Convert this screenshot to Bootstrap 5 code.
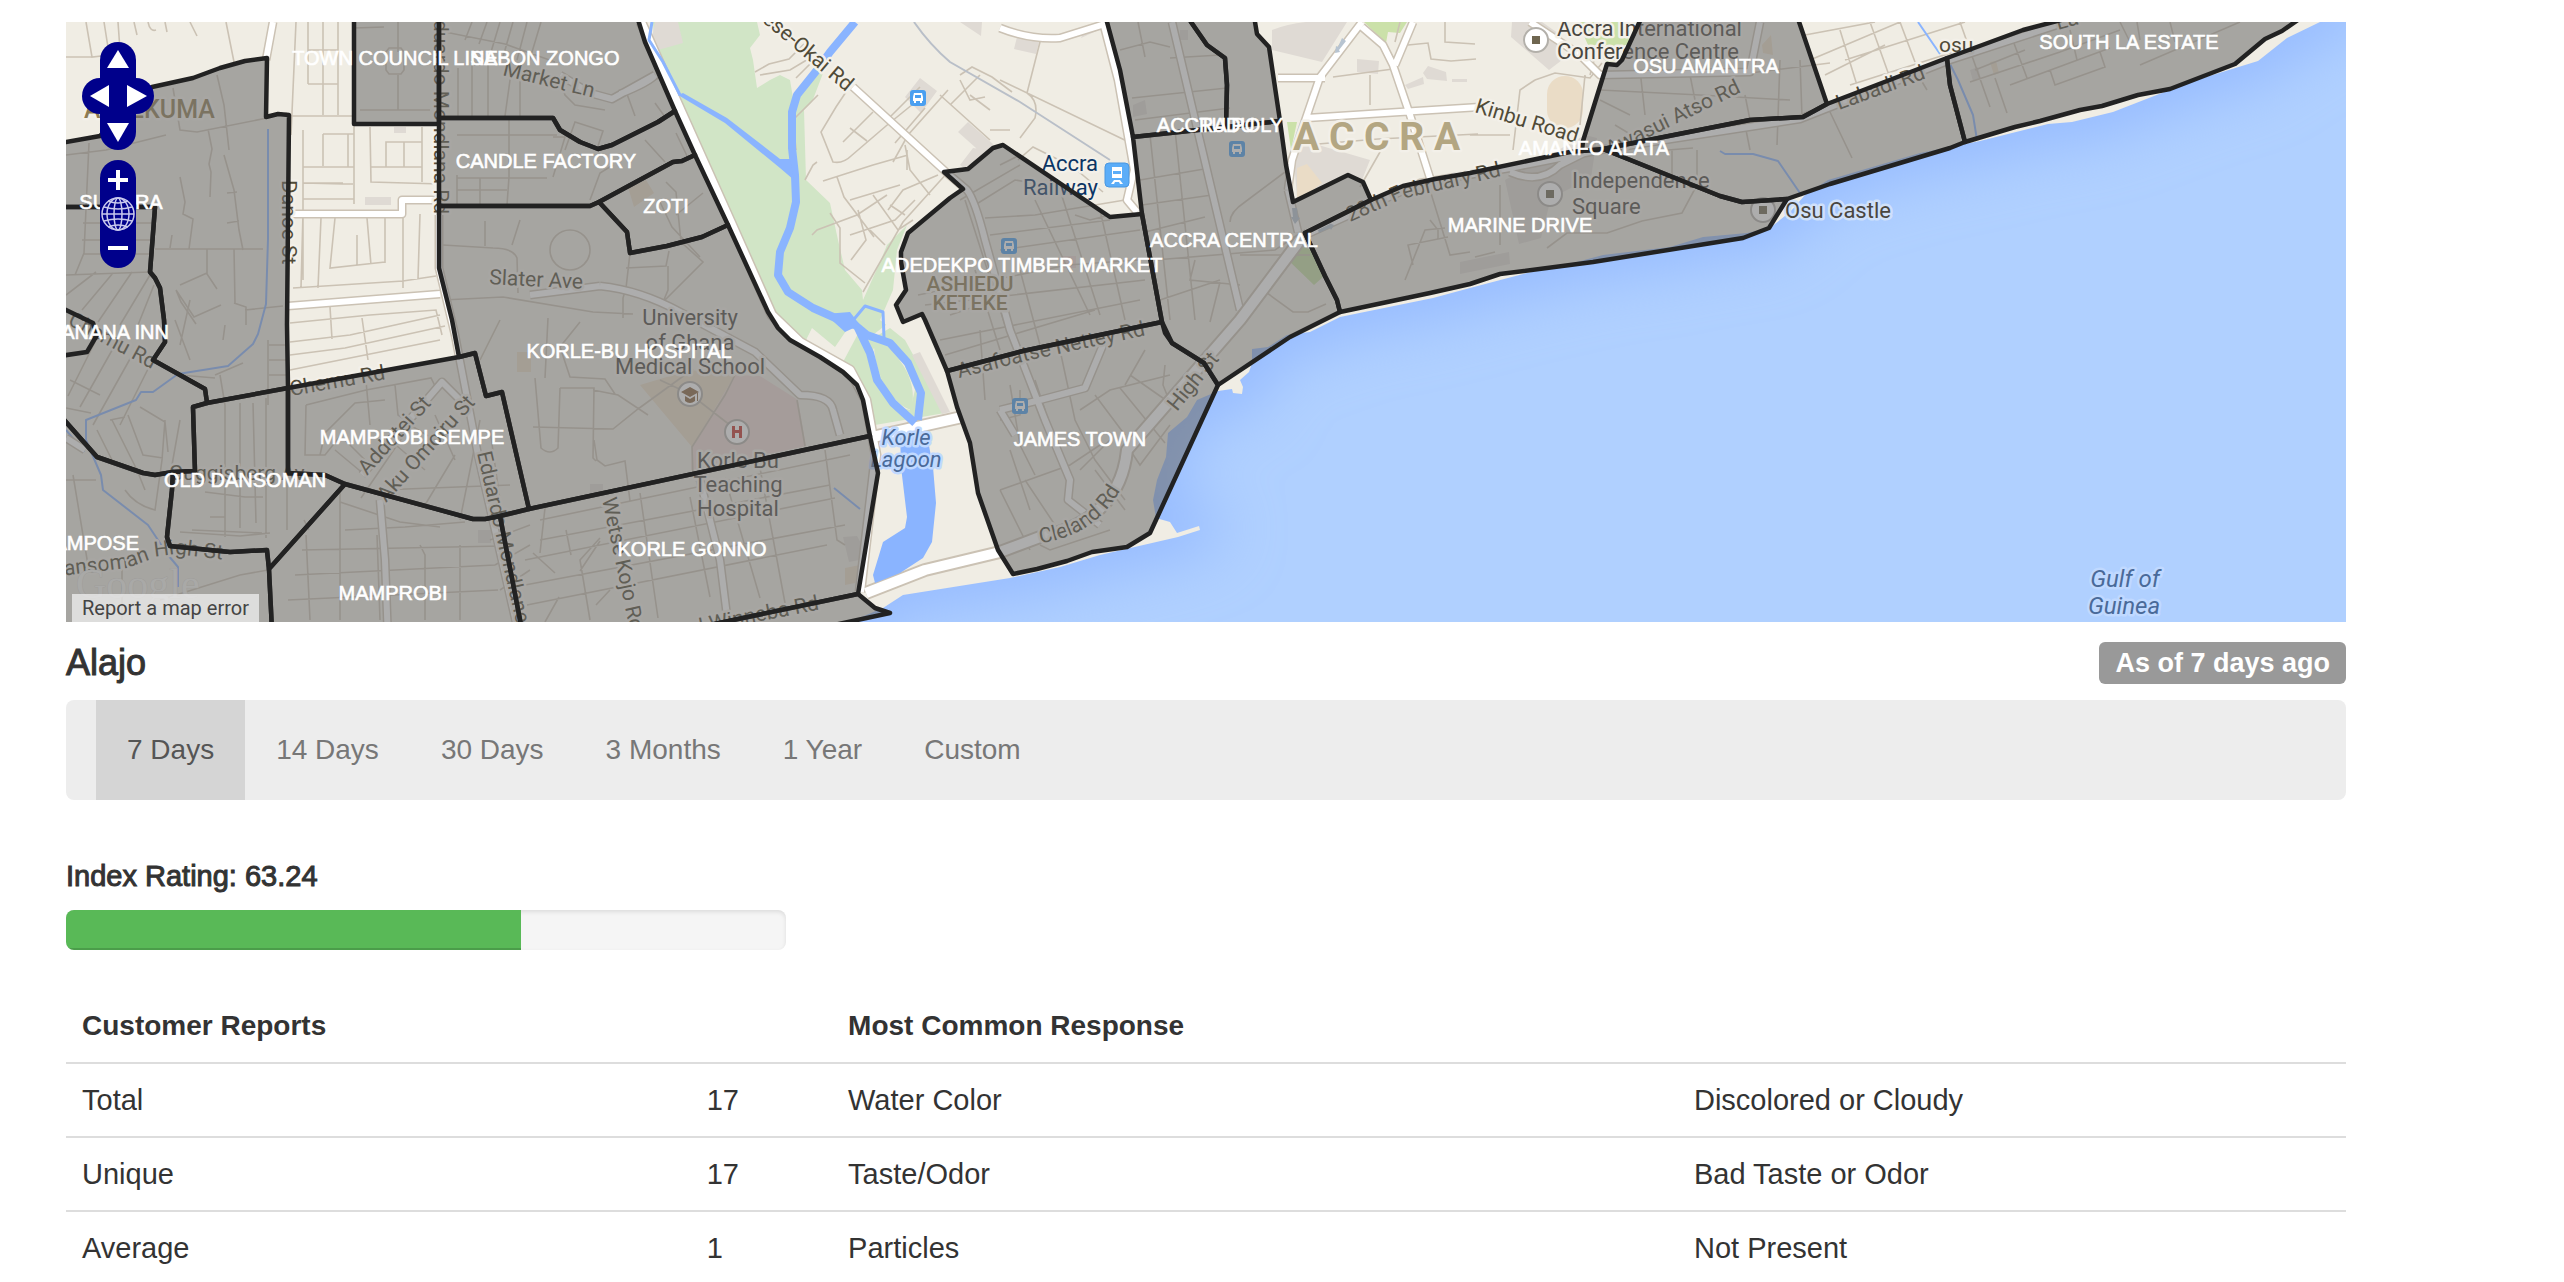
<!DOCTYPE html>
<html lang="en">
<head>
<meta charset="utf-8">
<meta name="viewport" content="width=device-width, initial-scale=1">
<title>Alajo water quality</title>
<link rel="stylesheet" href="https://cdn.jsdelivr.net/npm/bootstrap@5.3.0/dist/css/bootstrap.min.css">
<style>
body{font-family:"Liberation Sans",Arial,sans-serif;font-size:28px;line-height:40px;color:#333;background:#fff}
.page-shell{max-width:2346px;padding:22px 0 0 66px}
.map-box{background:#b0d0ff}
.map-box>svg{width:100%;height:auto}
.map-controls{position:absolute;left:16px;top:20px}
.map-controls button{width:36px;height:36px;padding:0;border:0;background:transparent;display:block}
.map-controls svg{display:block}
.pan-pad{width:72px;height:108px}
.pan-pad::before,.pan-pad::after{content:"";position:absolute;background:#00008b;border-radius:18px}
.pan-pad::before{left:18px;top:0;width:36px;height:108px}
.pan-pad::after{left:0;top:36px;width:72px;height:36px}
.pan-pad>*{position:relative;z-index:1}
.zoom-pill{background:#00008b;border-radius:18px}
.map-report{position:absolute;left:6px;bottom:0;height:28px;line-height:28px;padding:0 10px;font-family:Roboto,sans-serif;font-size:20px;color:#444;background:rgba(245,245,245,.7);text-decoration:none}
.place-name{font-size:36px;line-height:42px;font-weight:500;-webkit-text-stroke:1px #333}
.age-tag{font-size:27px;line-height:42px;font-weight:700;padding:0 16px;border-radius:6px;background:#999;color:#fff}
.range-bar{background:#ededed;border-radius:8px;padding:0 30px}
.range-bar .nav-link{padding:30px 31px;line-height:40px;color:#777}
.range-bar .nav-link.active{background:#d5d5d5;color:#555}
.rating-title{font-size:29px;line-height:32px;font-weight:500;margin:60px 0 18px;-webkit-text-stroke:1px #333}
.rating-track{width:720px;max-width:100%;height:40px;border-radius:8px;background:#f5f5f5;box-shadow:inset 0 2px 4px rgba(0,0,0,.1)}
.rating-track .progress-bar{background:#59b957;box-shadow:inset 0 -2px 0 rgba(0,0,0,.15)}
.report-table{margin-top:40px;table-layout:fixed;color:#333;border-color:#ddd}
.report-table>:not(caption)>*>*{padding:16px;border-bottom-width:2px;color:#333}
.report-table td{font-size:29px}
.c-name{width:27.4%}.c-count{width:6.2%}.c-kind{width:37.1%}
/* map drawing */
.minor{fill:none;stroke:#cbc2b4;stroke-width:1.6}
.casing{fill:none;stroke:#cbc2b4;stroke-linejoin:round}
.major{fill:none;stroke:#fff;stroke-linejoin:round}
.mid .casing,.casing.mid{stroke-width:9}.major.mid{stroke-width:6}
.casing.wide{stroke-width:14}.major.wide{stroke-width:10}
.river{fill:none;stroke:#8ab4ff;stroke-linejoin:round}
.park{fill:#d1e5c6}.bldg{fill:#dfdad4}.sand{fill:#f0ede4}
.zones{fill:#6d6d6d;fill-opacity:.56;stroke:#222;stroke-width:4.500;stroke-linejoin:round}
.road-text{font-family:Roboto,sans-serif;font-size:21px;fill:#504b38;stroke:#f3f0e9;stroke-width:5;stroke-linejoin:round;paint-order:stroke}
.poi-text{font-family:Roboto,sans-serif;font-size:22px;fill:#494640;stroke:#f3f0e9;stroke-width:5;stroke-linejoin:round;paint-order:stroke}
.zone-text{font-family:"Liberation Sans",Arial,sans-serif;font-size:20px;fill:#fff;stroke:#fff;stroke-width:.6}
</style>
<script src="https://cdn.jsdelivr.net/npm/bootstrap@5.3.0/dist/js/bootstrap.bundle.min.js"></script>
</head>
<body>
<main class="page-shell">
<section class="map-box position-relative overflow-hidden" aria-label="District map">
<svg class="d-block" viewBox="66 22 2280 600" role="img" aria-label="Accra districts">
<defs>
<filter id="soft" x="-10%" y="-30%" width="120%" height="160%"><feGaussianBlur stdDeviation="30"/></filter>
<path id="land" d="M40,0H2350L2320,22 2287,38 2258,61 2190,82 2113,112 2072,122 2048,124 1980,141 1950,147 1920,153 1828,180 1805,195 1790,212 1770,228 1747,233 1703,237 1670,247 1603,255 1573,263 1527,273 1470,288 1433,298 1340,317 1310,332 1287,335 1268,347 1252,349 1252,363 1249,372 1240,380 1243,387 1242,394 1233,393 1232,389 1218,391 1197,400 1187,417 1168,433 1166,457 1157,480 1153,500 1156,518 1170,522 1177,533 1199,526 1200,530 1178,537 1100,555 1060,567 1010,578 947,588 903,595 883,608 840,626 840,650H40Z"/>
<g id="bus"><rect width="16" height="16" rx="3" fill="#4a9ff0"/><path d="M4 3h8l1 4v4h-1v2h-2v-2H6v2H4v-2H3V7z" fill="#fff"/><path d="M5 5h6v3H5z" fill="#4a9ff0"/></g>
</defs>
<use href="#land" fill="#96bbff" stroke="#96bbff" stroke-width="40" filter="url(#soft)"/>
<use href="#land" fill="#f0ede4"/>

<!-- parks and blocks -->
<path class="park" d="M653,22H757L760,35 750,48 753,60 757,88 770,80 780,75 790,80 793,98 817,70 825,68 812,102 804,110 806,180 830,203 838,240 845,270 862,290 863,300 880,262 887,245 907,225 897,250 893,290 880,320 905,340 945,413 875,425 860,382 842,364 800,345 770,315 735,235 690,140 655,55Z"/>
<path class="sand" d="M806,340L812,328 835,347 848,328 860,330 843,362ZM866,340L890,322 895,310 903,322 925,320 947,371 957,410 945,414 920,355 895,325 880,334ZM872,352L874,348 903,362 915,390 910,410 895,406 880,375Z"/>
<path class="park" d="M874,345C895,345 920,380 911,410 895,405 875,380 874,345Z"/>
<path class="bldg" d="M655,22H678L683,43 658,50 652,38ZM920,78l17,13-16,22-16-16ZM958,132l10-10 25,22-8,12ZM960,165l13-17 20,3-24,21ZM960,22h22l-1,14ZM1017,37l22,5-3,12-22-5ZM1081,38l22-10v-6l-18,6ZM912,355l8-3 30,60-8,2ZM1272,30q30,-12 75,-8l-25,40-50-12ZM1357,59l22,2-1,13-21-2ZM1405,85l18-8 1,7-16,5ZM1423,73l5-7 18,6 1,9-20-2ZM1452,79h15v3h-15ZM1293,150l15-8 62,18-8,20-20,-3-45,20ZM1512,22h30l20,14v24l-13,10-38-33ZM365,197h26v8h-26ZM394,127h12v6h-12Z"/>
<path fill="#cbe1a9" d="M1364,22H1407L1400,33 1388,32 1386,43ZM1287,122H1297L1291,150ZM1578,22H1640L1622,60 1607,62 1588,45Z"/>
<path fill="#eadcc6" d="M1297,202V168L1307,164 1322,183ZM1762,45l9-10 2,20-10-2ZM640,385L690,370 735,375 692,447ZM628,187l18-7 8,13-20,14ZM845,568l15-3-5,18-10,2ZM517,352h14v20h-14ZM1990,62l6-1 3,12-5,2Z"/>
<path fill="#ecd8d3" d="M735,375L760,376 798,400 806,446 691,470 692,447ZM1062,256h14v12h-14Z"/>
<path fill="#c6dfa5" d="M1288,260L1303,247 1313,250 1323,277 1314,285Z"/>
<rect x="1547" y="76" width="36" height="52" rx="18" fill="#eadcc6"/>
<path class="bldg" d="M1505,180l80-45 12,3-6,40-40,20-10,40-22,6ZM1460,262l49-10 1,12-50,10ZM1180,30h8v10h-8ZM1133,105l12-5 2,14-14,3ZM843,537l14-1 12,22-20,4ZM1970,70l8-3 3,12-8,2ZM590,484h13v10h-13ZM478,530h13v13h-13Z"/>

<!-- local streets -->
<path class="minor" d="M86,22L92,57 110,55M104,22L110,60M118,22L120,50M66,57L92,57M134,22L137,35M148,22Q150,32 156,30M165,22l2,10M190,22l7,14M226,22l8,40M173,88l7,42 17,2 70-14 20-5M217,75l7,30 5,45M208,129l4,20-3,15 2,8-1,25M66,155l40,-5 60,-15M89,143l-5,110-9,22M83,223h70M82,240h70M84,254h68M66,275l84-3M66,295l30-23M82,310l31-37M98,322l34-50M120,325l30-50M138,325l16-40M224,155l10,35 5,40 4,20M155,249h108M180,177l5,25-2,12 10,5-4,30M172,235l-2,13M227,193l10-1M227,223l12-2M207,249v25l10,15M180,285l27-12M176,290l18,27 27-12M176,290l5,12 15,22M234,249l1,54M245,310l38-4M234,303l12,4v18M296,22l-5,113M308,22v62M323,22v93M338,22v93M308,84h30M308,50h30M291,116h63M303,130v150M323,134v32M348,134v33M323,134h31M303,167h51M303,183h40M303,199h51M354,124v80M370,127l1,55 70,2M370,167h52M386,167v-25h36M404,142v25M422,127v55M303,183l40,1 10,0M293,288l110-7 33-5M303,213l-2,75M321,218l-3,70M335,218l-5,50 55-6M367,218l4,47M385,218v45M357,235v30M403,213v75M420,214l-2,65M290,323l80-8 66-5 6,25M330,307l2,32M362,318l6,42M290,342l60-7 90-20M290,355l55-7 100-22M290,370l40-8 110-22"/>
<path class="minor" d="M398,22v30M354,28l30-1M389,48h12l3,4v18l-3,4h-12l-3-4v-18zM398,75v35M360,110h70M445,32l60,12 50,18M472,22l-7,18M487,22l-8,22M500,22l-9,30M513,22l-10,35M527,22l-10,38M541,22l-12,40M458,68v48M472,60v56M488,62v54M510,70v10l-5,36M520,75v42M457,135h100M457,178h90M480,178v28M509,120v57l-2,28M457,175v31M457,190h50M553,137l12,0-12,40M565,150l10-28 28,9-5,15M590,200l10-27 13,-8M611,100l50-23M627,94l8,22M655,103l10,14M645,140l20,22M676,133l12,25M560,80l5,15 10,10 30,5M630,253l-4,35-3,10v20M626,268l40-2 3-15M668,266v24l-5,12 40-40 -22-20-5-50-10-10M676,215l27,-22M660,202l12,25 28,30M443,245l50,3q20,0 24,10l1,35M485,221v25M520,220l-8,25M443,300l60-3 90,15 40,2M500,320l-20,40M548,318l-3,60M580,322l-20,25 10,30 35,2 10,15M560,388h34l-1,70 3,3M560,388l-2,60q-8,8 -17,0l-6,-70M533,427l80,2 25-20 55-40M593,390l25,5 30,20M594,440l3,20 8,6 20-5 5,40M660,380l30,14 45,35M735,375l-10,20-33,52 1,30M797,400l8,46M540,520l310-65M540,540l290-55M525,560l310-62M525,585l320-60M527,605l300-60M545,508l-5,45M566,530l5,25M640,493l18,125M690,497l20,100M725,478l35,120M760,468l25,135M825,450l12,90 8,5M590,620l-10-60 20,-22M533,553l22,20M580,571l20,-30M545,622l14-25M610,590l-14,15"/>
<path class="minor" d="M98,336l-30,60M115,345l-35,62M135,350l-42,75M70,380l30,15M150,365l-30,60M66,408l25,5M180,345l10-45M180,375l35,3M190,360l-15,-40M225,325l-2,15M215,375l28-12M220,375l5,30M268,340v65M269,345h18M269,360h18M269,375h18M140,407l25,15 3,30M110,420l15-3M97,430l15,30M112,420l25,50 8,20M128,415l15,40 20,3M165,420l-3,40-7,50q-20,-5 -30,-20M180,420l-8,45M66,480h30M73,475l15,90M225,405v130M240,403v125M253,403l3,120M266,398v140M205,492l40,5h18M225,497v40M210,517h15M180,532l60,4 30-3M192,530l70,3M287,470v60M306,405l-1,50h20l20,-25M306,405l60-15 65-12 5,10-75,110M320,455l5-22 30-30 30-3M335,450l30,25M365,370l5,55M395,385l3,30 15,10M345,440l20,20M410,425l30,18M390,440l35,30M435,415l20,45M480,420l-20,100M490,430l10,70M455,455l-30,50M380,490l130-5M340,502l60,20 40,5M345,530l60-3 60-5M380,620l-3,-85M309,530l-5-10M340,490v130M306,535l4,85M302,550l200-4M295,575l200-10M288,600l210-10M425,620v-65l-5-10M460,545v75M160,600l80-25 28-5M122,560v60M490,540l40-15M495,565l35-20M500,590l30,-20"/>
<path class="minor" d="M755,72l14-8 20,-5 15,-15M760,75l30-5 20-12M796,78l15,-15M818,95l-25,25 3,30M846,92l-10,15-15,25 12,30q10,2 18,-6l35-30 27-22M873,112l-30,30M850,128l17,13M805,180l8-15 4,-3M823,181l50-16 35-10M837,177l7,20 15,20 15,20M893,162l15-27 40-45M925,108l-30,35M887,120l33-33M905,145l5,25 20,25M907,150v20M850,200l50,-15M873,195l25,35 15-10M888,210l15-20 35,-15M812,235l5-5 40-15 30,-20M830,213l10,15v35l25,20M850,235l45-15 20-20M858,210l8,30-15,20M870,230l15,15M890,205l15,10M863,292l40-70 45-50M960,75l12-8 20,10 20,15M940,95l50,45M950,105l30-30M970,95l20,15M990,130h20M960,80l10,20 15-3"/>
<path class="minor" d="M1041,38l-14,55M1000,80l135,65M1027,93q12,8 8,25l-15,20M1018,160l15-13 40,20 30,25M1000,165l20,-10M1120,50l30-8 20,5M1138,22l7,35M1170,58l50-3M1132,98l95-10M1135,120l95-12M1150,135l20,185M1175,130l20,190M1140,180l70-12M1142,205l70-10M1145,232l60-15M1155,260l120-10 30,-20M1195,260l-5,20 50,5M1230,222q0,-10 15,-20l40-30M1240,255h70M1263,290l30,22h15l18,-8M1160,300l60-20M1210,322l10,-40M1405,280l20,-50 20,-2M1430,190l20,65 20-3M1413,265l-5-20 40-8M1430,220l8,10v10M1333,77l60-8M1370,75v30M1318,144l60-5 100-5M1380,152l-20,35M1400,22l-5,20M1445,22v20l30,2M1408,45l20,-2 3,16 20,2 25-2M1535,80l-15,10-7,60M1535,80l20-7 35,5 12,-15M1585,75l-5,50M1470,135h40M1590,75l6-22M1600,90l100,5 90,5M1620,78l130,-5 80,-10M1640,70l5,45M1690,75l8,40M1600,100l30,15M1615,125l25,15M1745,95l5,25M1780,60l-3,85M1800,60l2,57M1830,112l22,46M1745,125l5,25M1697,150v35l-15,28-40,8-35,12h-40l-20,15M1672,150v30M1668,150l25,-2M1500,185v60M1475,257l20,-5M1805,35l70,-13M1810,60l90-38M1845,60l120-38M1850,85l110-35M1840,30l20,65M1870,22l25,70M1900,22l15,40M1825,75l60-30M1915,70l12,20M1960,22l30,85M1970,82l90-30 60-22M1975,70l50-20M2012,38l15,40M2010,85l100-37M2050,70l5,15 50-18-5-15M1995,78l12,35M2140,65l100-43M2070,30l7,30M2120,22l10,20M2140,40l-3-18M2170,22l5,20"/>
<path class="minor" d="M950,315l60,-20M918,295l150-30 70-5M925,305l220-25M940,340l200-40M945,355l150,-45M960,200l60-35M975,205l40-25 30,5M985,218l50,-3 90-15M990,235l120-15M1000,250l140-20M1035,200l55,115M1060,190l40,125M1100,210l25,110M965,200l40,125M1075,215l15,5 20,-5M975,270l25,80M1020,270l20,75M985,400l-5,-70M1000,420l20,-5v-25M1010,385l10,60 15,30M1035,380l10,30M1060,350l15,70 20,40 30,40M1080,410l30,-20 60-15M1095,395l30,40M1120,388l45,55M1130,375l50,35M1145,350l-20,35M1165,365l-2,20 8,20M1000,490l70-25 30-20M1000,490l30,60M1025,480l30,45M1080,470l30-30M1095,470l30,40M1150,425l-20,25 10,15 30,-40M1040,545l10,5 60-20M1030,510l-20,-60"/>
<circle class="minor" cx="570" cy="250" r="20"/>
<path class="river" stroke-width="2" d="M268,129v110l-2,65-8,30-5,10-25,22-50,8-25,18h-12l-5,8-50,20v20l15,35 2,15 45,35 20,30 10,12v20M66,430l18,22M834,488l26,21M1720,151l5,3h28l25,7 24,35M1948,60l10,20 15,35 4,25M1918,22l22,32"/>

<!-- main roads -->
<g class="casing mid">
<path d="M273,22L266,60M290,214H402V200H440M288,306L440,294M620,94Q650,82 655,75M560,75L590,93 612,99 655,75M439,206V268L455,335 478,455 520,640M600,286Q640,290 680,312L755,352 800,395Q830,395 833,410L840,435M530,295L600,286M853,87L947,173 967,190Q975,200 985,240L1010,330 1045,420 1070,480 1068,500 1100,525M1000,28Q1030,40 1060,38L1105,24M1103,22L1118,80 1134,170 1127,200 1137,212M1172,22L1240,310M1362,22L1320,77 1306,118 1292,160 1288,190M1278,78H1325M1362,27L1383,45 1393,65 1410,115 1430,178M1413,22L1395,65M1307,118L1400,112 1480,107M1288,190L1298,232M1303,236L1420,183 1510,168 1600,150 1800,119 1950,60 2060,24M1510,172Q1540,185 1560,165L1590,150M1530,22L1580,55 1600,75 1750,72 1760,22M700,480L720,560 730,640M380,500L385,560 388,640M66,438L85,450M362,475L442,382 470,410M1000,410L1040,400 1085,388 1103,345M1015,435L1000,410"/>
</g>
<g class="major mid">
<path d="M273,22L266,60M290,214H402V200H440M288,306L440,294M620,94Q650,82 655,75M560,75L590,93 612,99 655,75M439,206V268L455,335 478,455 520,640M600,286Q640,290 680,312L755,352 800,395Q830,395 833,410L840,435M530,295L600,286M853,87L947,173 967,190Q975,200 985,240L1010,330 1045,420 1070,480 1068,500 1100,525M1000,28Q1030,40 1060,38L1105,24M1103,22L1118,80 1134,170 1127,200 1137,212M1172,22L1240,310M1362,22L1320,77 1306,118 1292,160 1288,190M1278,78H1325M1362,27L1383,45 1393,65 1410,115 1430,178M1413,22L1395,65M1307,118L1400,112 1480,107M1288,190L1298,232M1303,236L1420,183 1510,168 1600,150 1800,119 1950,60 2060,24M1510,172Q1540,185 1560,165L1590,150M1530,22L1580,55 1600,75 1750,72 1760,22M700,480L720,560 730,640M380,500L385,560 388,640M66,438L85,450M362,475L442,382 470,410M1000,410L1040,400 1085,388 1103,345M1015,435L1000,410"/>
</g>
<path class="casing wide" d="M868,438L962,417M866,593L925,570 1000,552 1040,537Q1120,520 1127,450L1240,320 1300,240"/>
<path class="casing" stroke-width="11" d="M641,22L732,225 772,315 800,342 850,370 866,400 876,455 860,592"/>
<path class="major" stroke-width="8" d="M641,22L732,225 772,315 800,342 850,370 866,400 876,455 860,592"/>
<path class="major wide" d="M868,438L962,417M866,593L925,570 1000,552 1040,537Q1120,520 1127,450L1240,320 1300,240"/>
<path fill="none" stroke="#b9bfc8" stroke-width="2" d="M914,22Q930,45 950,62L1020,102 1110,160"/>

<!-- river and lagoon -->
<path class="river" stroke-width="8" d="M855,22L830,52 817,70 797,95 792,112V148L795,175 796,202 790,228 780,252 778,275 788,292 813,308 840,320 855,325 867,335 890,343 908,363 921,393 918,420M858,328L870,353 877,380 893,403 915,423"/>
<path class="river" stroke-width="3" d="M652,22L649,40 663,62 680,95M850,324L865,306 883,312 884,338"/>
<path fill="#8ab4ff" d="M678,95L683,93 727,118 780,159H790L794,180 780,168 725,123ZM825,314L850,312 860,325 845,332ZM900,432L927,435 933,467 936,503 932,542 923,558 900,573 875,583 873,575 883,542 905,528 907,517 901,467Z"/>

<!-- street and place names -->
<g class="road-text">
<text transform="translate(282 180) rotate(90)">Danoe St</text>
<text transform="translate(434 214) rotate(90)" text-anchor="end">Eduardo Mondlana Rd</text>
<text transform="translate(477 453) rotate(77)">Eduardo Mondlane</text>
<text transform="translate(502 75) rotate(14)">Market Ln</text>
<text transform="translate(489 284) rotate(3)">Slater Ave</text>
<text transform="translate(291 396) rotate(-10)">Chemu Rd</text>
<text transform="translate(67 324) rotate(28)">Chemu Rd</text>
<text x="169" y="480">Guggisberg Av</text>
<path id="p-dan" d="M51,577L127,568 160,556 176,554 260,564" fill="none" stroke="none"/>
<text><textPath href="#p-dan">Dansoman High St</textPath></text>
<text transform="translate(367 476) rotate(-48)">Addotei St</text>
<text transform="translate(386 503) rotate(-48)">Aku Omoiru St</text>
<text transform="translate(602 499) rotate(78)">Wetse Kojo Rd</text>
<text transform="translate(694 634) rotate(-11)">J Winneba Rd</text>
<text transform="translate(846 92) rotate(40)" text-anchor="end">Obese-Okai Rd</text>
<path id="p-asa" d="M959,378L1030,360 1170,330" fill="none" stroke="none"/>
<text><textPath href="#p-asa">Asafoatse Nettey Rd</textPath></text>
<text transform="translate(1177 412) rotate(-51)">High St</text>
<path id="p-cle" d="M1040,543Q1105,535 1130,470" fill="none" stroke="none"/>
<text><textPath href="#p-cle">Cleland Rd</textPath></text>
<path id="p-feb" d="M1350,222L1402,199 1510,174 1540,168" fill="none" stroke="none"/>
<text><textPath href="#p-feb">28th February Rd</textPath></text>
<text transform="translate(1474 112) rotate(17)">Kinbu Road</text>
<text transform="translate(1610 156) rotate(-26)">Awasui Atso Rd</text>
<text transform="translate(1839 110) rotate(-20)">Labadi Rd</text>
<text x="1939" y="52">osu</text>
<text transform="translate(2058 30) rotate(-16)">La</text>
</g>
<g class="poi-text">
<text x="1557" y="36">Accra International</text><text x="1557" y="59">Conference Centre</text>
<text x="1572" y="188">Independence</text><text x="1572" y="214">Square</text>
<g text-anchor="middle"><text x="690" y="325">University</text><text x="690" y="350">of Ghana</text><text x="690" y="374">Medical School</text>
<text x="738" y="468">Korle Bu</text><text x="738" y="492">Teaching</text><text x="738" y="516">Hospital</text></g>
<g text-anchor="end" style="fill:#0b3565"><text x="1098" y="171">Accra</text><text x="1098" y="195">Railway</text></g>
<g text-anchor="middle" font-style="italic" style="fill:#4a6a99;stroke:#c0d9ff"><text x="906" y="445">Korle</text><text x="906" y="467">Lagoon</text>
<text x="2125" y="587" style="font-size:24px">Gulf of</text><text x="2124" y="614" style="font-size:24px">Guinea</text></g>
<text x="1785" y="218" style="stroke:#cfe0fa">Osu Castle</text>
<g font-weight="500" style="fill:#8d7b52"><text x="84" y="118" style="font-size:25px">ABLEKUMA</text><g text-anchor="middle" style="font-size:21px"><text x="970" y="291">ASHIEDU</text><text x="970" y="310">KETEKE</text></g></g>
<text x="1293" y="150" font-weight="700" style="font-size:39px;fill:#b3a682">A C C R A</text>
<text x="76" y="598" style="font-family:'Liberation Serif',serif;font-size:42px;fill:#f6f5f2;stroke:#dcd9d2;stroke-width:1">Google</text>
</g>

<!-- place markers -->
<g stroke="#b3b0aa" stroke-width="2" fill="#fff"><circle cx="1536" cy="40" r="12"/><circle cx="1550" cy="194" r="12"/><circle cx="1763" cy="210" r="12"/><circle cx="690" cy="394" r="12"/><circle cx="737" cy="432" r="12"/></g>
<path fill="#6f6650" d="M1532,36h8v8h-8zM1546,190h8v8h-8zM1759,206h8v8h-8z"/>
<path fill="#8a6440" d="M681,392L690,387 699,392 690,397ZM685,396L690,399 695,396V401Q690,405 685,401ZM697,393h1v8h-1z"/>
<path fill="#c4342c" d="M732,426h3v4h4v-4h3v12h-3v-5h-4v5h-3z"/>
<use href="#bus" x="910" y="90"/><use href="#bus" x="1001" y="238"/><use href="#bus" x="1229" y="141"/><use href="#bus" x="1012" y="398"/>
<rect x="1105" y="163" width="24" height="24" rx="4" fill="#5badf8" stroke="#4a97e0"/><path fill="#fff" d="M1112,167h10v11h-10zM1111,184l3-4h6l3,4h-3l-1-2h-4l-1,2z"/><path fill="#5badf8" d="M1113,171h8v3h-8z"/>
<path fill="#b7c4d1" d="M1342,38l4,3-7,9 1,2-5,1 1-7 2,1zM1292,208h5l1,9 2,1-5,6-4-7h2zM1318,230l12-6-1-1 5,2-3,5-1-2-11,5z"/>

<!-- districts -->
<g class="zones">
<path d="M50,144L66,142 100,136 152,87 193,78 220,68 245,61 267,58 266,117 278,114 289,115 287,325 288,388 207,403 205,389 153,360 165,342 164,320 160,288 155,278 150,272 155,207 50,207Z"/>
<path d="M50,207H155L150,272 155,278 160,288 164,320 165,342 153,360 205,389 207,403 193,407 195,471 173,472 155,475 143,473 97,457 66,422 50,404Z"/>
<path fill="none" d="M60,307L66,310 93,323 97,335 87,352 60,356"/>
<path d="M50,404L66,422 97,457 143,473 155,475 173,472 172,490 167,537 170,546 230,552 267,550 269,569 272,630H50Z"/>
<path d="M207,403L288,388V473L325,475 345,484 269,569 267,550 230,552 170,546 167,537 172,490 173,472 195,471 193,407Z"/>
<path d="M345,484L473,519 485,519 500,516 522,630H272L269,569Z"/>
<path d="M288,388L459,357 475,353 486,396 502,392 529,509 500,516 485,519 473,519 345,484 325,475 288,473Z"/>
<path d="M354,10V124H439V10Z"/>
<path d="M439,10V118H553L560,130 580,142 598,149 612,145 658,122 675,111 645,42 635,10Z"/>
<path d="M439,118H553L560,130 580,142 598,149 612,145 658,122 675,111 695,155 682,161 673,162 599,202 590,206H439Z"/>
<path d="M695,155L728,225 702,237 667,246 630,253 627,232 599,202 673,162 682,161Z"/>
<path d="M439,206H590L599,202 627,232 630,253 667,246 702,237 728,225 768,312 778,328 790,340 820,357 843,372 857,385 863,400 870,436 529,509 502,392 486,396 475,353 459,357 452,320 439,268Z"/>
<path d="M529,509L870,436 878,473 858,594 700,627 522,630 500,516Z"/>
<path d="M858,594L875,608 890,613 820,628 700,627Z"/>
<path d="M944,172L968,169 993,148 1003,145 1110,217 1142,214 1162,322 1023,351 947,371 925,320 922,314 903,322 896,305 906,290 901,262V252L908,233 950,198 963,189Z"/>
<path d="M947,371L1023,351 1162,322 1165,333 1172,343 1204,363 1218,385 1150,533 1127,547 1092,552 1067,561 1037,569 1013,574 998,550 978,493 970,443 957,407Z"/>
<path d="M1104,10L1107,22 1120,70 1133,137 1226,127 1227,85 1225,58 1207,45 1191,22 1185,10Z"/>
<path d="M1185,10L1191,22 1207,45 1225,58 1227,85 1226,127 1280,121 1269,47 1257,34 1253,10Z"/>
<path d="M1133,137L1226,127 1280,121 1286,165 1293,202 1348,175 1363,182 1371,200 1305,233 1325,276 1337,300 1340,312 1290,337 1218,385 1204,363 1172,343 1162,322 1142,214Z"/>
<path d="M1305,233L1371,200 1403,186 1435,179 1470,173 1570,152 1603,149 1720,196 1742,202 1787,199 1769,228 1743,238 1593,262 1500,274 1470,284 1430,293 1340,312 1337,300 1325,276Z"/>
<path d="M1645,10L1622,60 1617,65 1607,64 1583,141 1582,151 1603,149 1750,120 1803,117 1827,104 1795,10Z"/>
<path d="M1603,149L1750,120 1803,117 1827,104 1947,58 1950,85 1965,142 1950,148 1830,184 1787,199 1742,202 1720,196Z"/>
<path d="M1947,58L2023,30 2080,15H2305L2282,31 2265,39 2235,64 2170,89 2138,95 2102,106 2080,110 2040,121 2015,127 1965,142 1950,85Z"/>
</g>
<g class="zone-text" text-anchor="middle">
<text x="395" y="65">TOWN COUNCIL LINE</text><text x="545" y="65">SABON ZONGO</text><text x="546" y="168">CANDLE FACTORY</text>
<text x="121" y="209">SUKURA</text><text x="666" y="213">ZOTI</text><text x="629" y="358">KORLE-BU HOSPITAL</text>
<text x="169" y="339" text-anchor="end">BANANA INN</text><text x="245" y="487">OLD DANSOMAN</text><text x="412" y="444">MAMPROBI SEMPE</text>
<text x="139" y="550" text-anchor="end">MAMPOSE</text><text x="393" y="600">MAMPROBI</text><text x="692" y="556">KORLE GONNO</text>
<text x="1022" y="272">ADEDEKPO TIMBER MARKET</text><text x="1080" y="446">JAMES TOWN</text><text x="1220" y="132">ACCRA POLY</text><text x="1227" y="132">TUDU</text>
<text x="1234" y="247">ACCRA CENTRAL</text><text x="1520" y="232">MARINE DRIVE</text><text x="1706" y="73">OSU AMANTRA</text>
<text x="1594" y="155">AMANFO ALATA</text><text x="2129" y="49">SOUTH LA ESTATE</text>
</g>
</svg>
<div class="map-controls d-flex flex-column align-items-center" style="gap:10px">
<div class="pan-pad position-relative d-flex flex-column align-items-center">
<button type="button" aria-label="Pan up"><svg width="36" height="36"><path fill="#fff" d="M18 8L29 26H7z"/></svg></button>
<div class="d-flex w-100 justify-content-between">
<button type="button" aria-label="Pan left"><svg width="36" height="36"><path fill="#fff" d="M8 18L27 7v22z"/></svg></button>
<button type="button" aria-label="Pan right"><svg width="36" height="36"><path fill="#fff" d="M29 18L9 7v22z"/></svg></button>
</div>
<button type="button" aria-label="Pan down"><svg width="36" height="36"><path fill="#fff" d="M7 9h22L18 28z"/></svg></button>
</div>
<div class="zoom-pill">
<button type="button" aria-label="Zoom in"><svg width="36" height="36"><path stroke="#fff" stroke-width="4" d="M8 20h20M18 10v20"/></svg></button>
<button type="button" aria-label="Zoom to full extent"><svg width="36" height="36" fill="none" stroke="#c9c9ee" stroke-width="1.5"><circle cx="18" cy="18" r="16"/><ellipse cx="18" cy="18" rx="11" ry="16"/><ellipse cx="18" cy="18" rx="4" ry="16"/><path d="M2 18h32M4 11q14 4 28 0M4 25q14-4 28 0M8 5q10 4 20 0M8 31q10-4 20 0"/></svg></button>
<button type="button" aria-label="Zoom out"><svg width="36" height="36"><path stroke="#fff" stroke-width="4" d="M8 16h20"/></svg></button>
</div>
</div>
<a class="map-report" href="#">Report a map error</a>
</section>

<div class="d-flex justify-content-between align-items-center" style="margin:20px 0 16px">
<h1 class="place-name m-0">Alajo</h1>
<span class="age-tag">As of 7 days ago</span>
</div>
<ul class="nav range-bar">
<li class="nav-item"><a class="nav-link active" aria-current="page" href="#">7 Days</a></li>
<li class="nav-item"><a class="nav-link" href="#">14 Days</a></li>
<li class="nav-item"><a class="nav-link" href="#">30 Days</a></li>
<li class="nav-item"><a class="nav-link" href="#">3 Months</a></li>
<li class="nav-item"><a class="nav-link" href="#">1 Year</a></li>
<li class="nav-item"><a class="nav-link" href="#">Custom</a></li>
</ul>
<h2 class="rating-title">Index Rating: 63.24</h2>
<div class="progress rating-track" role="progressbar" aria-label="Index rating" aria-valuenow="63.24" aria-valuemin="0" aria-valuemax="100"><div class="progress-bar" style="width:63.24%"></div></div>
<table class="table report-table mb-0">
<colgroup><col class="c-name"><col class="c-count"><col class="c-kind"><col></colgroup>
<thead><tr><th scope="col" colspan="2">Customer Reports</th><th scope="col" colspan="2">Most Common Response</th></tr></thead>
<tbody>
<tr><td>Total</td><td>17</td><td>Water Color</td><td>Discolored or Cloudy</td></tr>
<tr><td>Unique</td><td>17</td><td>Taste/Odor</td><td>Bad Taste or Odor</td></tr>
<tr><td>Average</td><td>1</td><td>Particles</td><td>Not Present</td></tr>
</tbody>
</table>
</main>
</body>
</html>
